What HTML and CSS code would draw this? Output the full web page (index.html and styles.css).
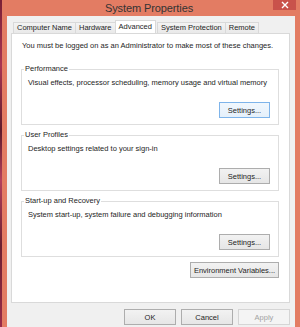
FILE: index.html
```html
<!DOCTYPE html>
<html lang="en">
<head>
  <meta charset="UTF-8">
  <title>System Properties</title>
  <link rel="stylesheet" href="styles.css">
</head>
<body>
  <div class="screen">
    <!-- Desktop wallpaper peeking out on the left -->
    <div class="wallpaper"></div>

    <div class="window">
      <!-- Title Bar -->
      <div class="titlebar">
        <span class="title">System Properties</span>
        <button class="close" aria-label="Close">
          <svg width="8" height="8" viewBox="0 0 8 8">
            <path d="M1 1 L7 7 M7 1 L1 7" stroke="#fff" stroke-width="1.4" fill="none"/>
          </svg>
        </button>
      </div>

      <!-- Dialog Body -->
      <div class="client">
        <div class="tabs">
          <div class="tab">Computer Name</div>
          <div class="tab">Hardware</div>
          <div class="tab active">Advanced</div>
          <div class="tab">System Protection</div>
          <div class="tab">Remote</div>
        </div>

        <div class="panel">
          <p class="note">You must be logged on as an Administrator to make most of these changes.</p>

          <fieldset class="group">
            <legend>Performance</legend>
            <p class="group-text">Visual effects, processor scheduling, memory usage and virtual memory</p>
            <div class="group-actions">
              <button class="btn focused">Settings...</button>
            </div>
          </fieldset>

          <fieldset class="group">
            <legend>User Profiles</legend>
            <p class="group-text">Desktop settings related to your sign-in</p>
            <div class="group-actions">
              <button class="btn">Settings...</button>
            </div>
          </fieldset>

          <fieldset class="group">
            <legend>Start-up and Recovery</legend>
            <p class="group-text">System start-up, system failure and debugging information</p>
            <div class="group-actions">
              <button class="btn">Settings...</button>
            </div>
          </fieldset>

          <div class="panel-actions">
            <button class="btn wide">Environment Variables...</button>
          </div>
        </div>

        <div class="dialog-actions">
          <button class="btn">OK</button>
          <button class="btn">Cancel</button>
          <button class="btn" disabled>Apply</button>
        </div>
      </div>
    </div>
  </div>
</body>
</html>
```

FILE: styles.css
```css
:root {
  --frame: #e37c63;
  --close: #c9524b;
  --dialog: #f0f0f0;
  --line: #d9d9d9;
  --group-line: #dedede;
  --btn-border: #adadad;
  --text: #1e1e1e;
}

* {
  margin: 0;
  padding: 0;
  box-sizing: border-box;
}

body {
  font-family: 'Liberation Sans', Arial, sans-serif;
  font-size: 7.5px;
  color: var(--text);
  width: 300px;
  height: 327px;
  overflow: hidden;
}

.screen {
  display: flex;
  height: 327px;
}

.wallpaper {
  width: 2px;
  background: linear-gradient(180deg, #7a2036 0%, #a83552 20%, #5e1a2a 40%, #b4405c 55%, #6b1f30 75%, #9a2c48 100%);
}

.window {
  flex: 1;
  display: flex;
  flex-direction: column;
  background-color: var(--frame);
  padding: 0 5px;
}

/* Title Bar */
.titlebar {
  height: 16px;
  display: grid;
  grid-template-columns: 1fr auto 1fr;
  align-items: start;
  margin: 0 -1px 0 -5px;
}

.title {
  grid-column: 2;
  font-size: 11px;
  line-height: 16px;
  color: #333;
  letter-spacing: -0.1px;
}

.close {
  grid-column: 3;
  justify-self: end;
  width: 23px;
  height: 10px;
  background-color: var(--close);
  border: none;
  display: flex;
  align-items: center;
  justify-content: center;
}

/* Dialog body */
.client {
  flex: 1;
  background-color: var(--dialog);
  padding-top: 6px;
}

.tabs {
  display: flex;
  align-items: flex-end;
  height: 11px;
  margin-left: 6px;
  position: relative;
  z-index: 1;
}

.tab {
  height: 11px;
  line-height: 9px;
  padding: 0 3px;
  border: 1px solid var(--line);
  border-bottom: none;
  background: linear-gradient(#f3f3f3, #e9e9e9);
  margin-right: -1px;
  white-space: nowrap;
}

.tab.active {
  height: 13px;
  line-height: 11px;
  background: #fff;
  margin: 0 1px 0 0;
  padding: 0 3px;
}

.panel {
  margin: 0 5px 0 4px;
  background-color: #fff;
  border: 1px solid var(--line);
  padding: 7px 10px 20px 9px;
  height: 270px;
}

.note {
  line-height: 10px;
  padding-left: 1px;
  margin-bottom: 13px;
}

.group {
  border: 1px solid var(--group-line);
  padding: 4px 8px 6px 6px;
  margin-bottom: 5px;
}

.group legend {
  line-height: 10px;
  padding: 0 1px;
  margin-left: -4px;
}

.group-text {
  line-height: 10px;
}

.group-actions {
  display: flex;
  justify-content: flex-end;
  margin-top: 14px;
}

.panel-actions {
  display: flex;
  justify-content: flex-end;
  margin-top: 2px;
}

.btn {
  font-family: inherit;
  font-size: 7.5px;
  color: var(--text);
  width: 51px;
  height: 16px;
  border: 1px solid var(--btn-border);
  background: linear-gradient(#f2f2f2, #e6e6e6);
}

.btn.focused {
  border-color: #7eb4ea;
  background: linear-gradient(#f1f7fd, #e5f0fb);
}

.btn.wide {
  width: 89px;
}

.btn:disabled {
  color: #a3a3a3;
  border-color: #d5d5d5;
  background: #f4f4f4;
}

.dialog-actions {
  display: flex;
  justify-content: flex-end;
  gap: 5px;
  margin: 6px 5px 0 0;
}

.dialog-actions .btn {
  width: 52px;
}
```
